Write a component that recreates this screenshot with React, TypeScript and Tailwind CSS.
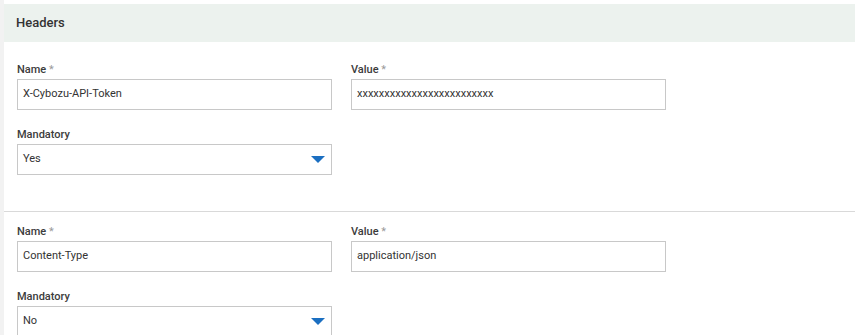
import React from "react";

function Label({ text, required }: { text: string; required?: boolean }) {
  return (
    <div className="h-[14px] leading-[14px] text-[11px] font-medium text-[#3c3c3c] mb-[2px]">
      {text}
      {required && <span className="text-[#9a9a9a] font-normal"> *</span>}
    </div>
  );
}

function TextBox({ value }: { value: string }) {
  return (
    <div className="w-[315px] h-[31px] border border-[#c8c8c8] bg-white flex items-center pl-[5px] text-[11px] text-[#333]">
      {value}
    </div>
  );
}

function SelectBox({ value }: { value: string }) {
  return (
    <div className="w-[315px] h-[31px] border border-[#c8c8c8] bg-white flex items-center justify-between pl-[5px] pr-[6px] text-[11px] text-[#333]">
      <span>{value}</span>
      <svg width="14" height="7" viewBox="0 0 14 7">
        <polygon points="0,0 14,0 7,7" fill="#1b6fc1" />
      </svg>
    </div>
  );
}

function HeaderBlock({
  name,
  value,
  mandatory,
  top,
  bottom,
}: {
  name: string;
  value: string;
  mandatory: string;
  top: string;
  bottom: string;
}) {
  return (
    <div className={`px-[13px] ${top} ${bottom}`}>
      <div className="flex gap-[19px]">
        <div>
          <Label text="Name" required />
          <TextBox value={name} />
        </div>
        <div>
          <Label text="Value" required />
          <TextBox value={value} />
        </div>
      </div>
      <div className="mt-[18px]">
        <Label text="Mandatory" />
        <SelectBox value={mandatory} />
      </div>
    </div>
  );
}

export default function App() {
  return (
    <div
      className="flex w-[855px] h-[335px] overflow-hidden bg-white"
      style={{ fontFamily: "Roboto, 'Liberation Sans', sans-serif" }}
    >
      <div className="w-[4px] h-full bg-[#f2f2f2]" />
      <div className="flex-1 pt-[4px]">
        <div className="h-[38px] bg-[#ecf2ee] flex items-center pl-[12px] text-[13px] font-medium text-[#333]">
          Headers
        </div>
        <HeaderBlock
          name="X-Cybozu-API-Token"
          value="xxxxxxxxxxxxxxxxxxxxxxxxx"
          mandatory="Yes"
          top="pt-[21px]"
          bottom="pb-[36px]"
        />
        <div className="h-[1px] bg-[#d9d9d9]" />
        <HeaderBlock
          name="Content-Type"
          value="application/json"
          mandatory="No"
          top="pt-[13px]"
          bottom="pb-[20px]"
        />
      </div>
    </div>
  );
}
